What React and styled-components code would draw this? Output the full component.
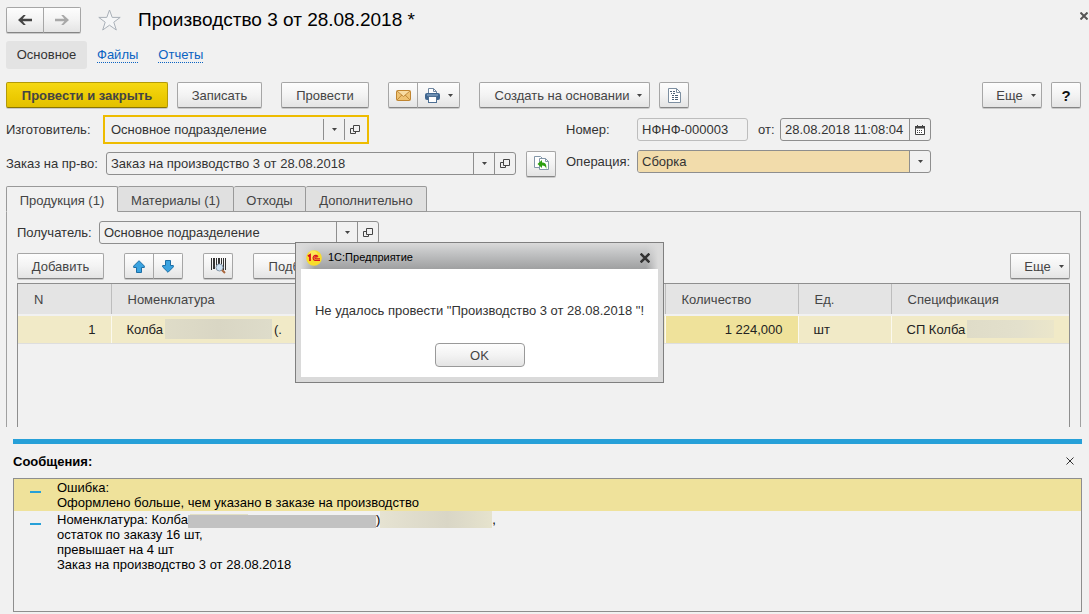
import React from "react";
import styled, { createGlobalStyle, css } from "styled-components";

const Global = createGlobalStyle`
  * { box-sizing: border-box; }
  body {
    margin: 0;
    background: #f1f1f1;
    color: #333;
    font: 13px/15px "Liberation Sans", Arial, sans-serif;
  }
  button, input, select { font: inherit; color: inherit; margin: 0; }
  h1, h2, p, ul { margin: 0; padding: 0; }
`;

const Page = styled.div`
  padding: 7px 8px 0 6px;
  position: relative;
`;

const Header = styled.header`
  display: flex;
  align-items: center;
  height: 25px;
`;

const raised = css`
  background: linear-gradient(#fdfdfd, #f3f3f3 50%, #e4e4e4);
  border: 1px solid #a6a6a6;
  border-bottom-color: #858585;
  border-radius: 2px;
  box-shadow: 0 1px 0 #c9c9c9;
`;

const Button = styled.button`
  ${raised}
  display: flex;
  align-items: center;
  justify-content: center;
  gap: 8px;
  flex: none;
  height: 26px;
  padding: 0;
  color: #444;
  width: ${(p) => p.$w}px;
  ${(p) => p.$drop && "padding-left: 8px;"}
  ${(p) =>
    p.$primary &&
    css`
      background: linear-gradient(#f5d813, #ecca02 60%, #e3c000);
      border-color: #b39a08;
      border-bottom-color: #8a7500;
      font-weight: bold;
    `}
  ${(p) =>
    p.$help &&
    css`
      font-weight: bold;
      font-size: 15px;
      color: #111;
    `}
`;

const Group = styled.div`
  display: flex;
  flex: none;
  ${Button} + ${Button} {
    margin-left: -1px;
    border-top-left-radius: 0;
    border-bottom-left-radius: 0;
  }
  ${Button}:first-child {
    border-top-right-radius: 0;
    border-bottom-right-radius: 0;
  }
`;

const Star = styled.button`
  border: 0;
  background: none;
  padding: 0;
  display: flex;
  margin: 0 16px;
`;

const Title = styled.h1`
  font-size: 19px;
  line-height: 24px;
  font-weight: normal;
  color: #000;
`;

const CloseButton = styled.button`
  border: 0;
  background: none;
  padding: 0;
  display: flex;
  margin-left: auto;
`;

const FormClose = styled(CloseButton)`
  position: absolute;
  top: 12px;
  right: 1px;
`;

const Sections = styled.nav`
  display: flex;
  align-items: center;
  height: 28px;
  margin-top: 9px;
  gap: 20px;
`;

const Current = styled.span`
  background: #e3e3e3;
  border-radius: 3px;
  line-height: 28px;
  width: 81px;
  text-align: center;
  margin-right: -10px;
`;

const SectionLink = styled.a`
  color: #0a63c2;
  text-decoration: none;
  border-bottom: 1px dotted #0a63c2;
  line-height: 15px;
`;

const Toolbar = styled.div`
  display: flex;
  align-items: flex-start;
  height: 27px;
  gap: ${(p) => p.$gap}px;
  margin-top: ${(p) => p.$top}px;
`;

const Cluster = styled.div`
  display: flex;
  gap: 9px;
`;

const Right = styled.div`
  display: flex;
  align-items: center;
  gap: 9px;
  margin-left: auto;
`;

const Form = styled.div`
  display: grid;
  grid-template-columns: 550px 365px;
  column-gap: 10px;
  margin-top: 6px;
`;

const FormColumn = styled.div`
  display: flex;
  flex-direction: column;
  gap: ${(p) => (p.$compact ? 9 : 6)}px;
  padding-top: ${(p) => (p.$compact ? 3 : 0)}px;
`;

const FieldRow = styled.div`
  display: flex;
  align-items: center;
  min-height: ${(p) => p.$h || 23}px;
`;

const Label = styled.label`
  flex: none;
  width: ${(p) => (p.$w ? p.$w + "px" : "auto")};
  white-space: nowrap;
`;

const Frame = styled.div`
  display: flex;
  flex: none;
  width: ${(p) => p.$w}px;
  height: 23px;
  border: 1px solid ${(p) => (p.$dim ? "#bdbdbd" : "#8e8e8e")};
  border-radius: 3px;
  overflow: hidden;
  ${(p) =>
    p.$focus &&
    css`
      height: 29px;
      border: 2px solid #eebc00;
      border-radius: 0;
      padding: 2px 2px 2px 0;
    `}
`;

const fieldText = css`
  flex: 1;
  min-width: 0;
  border: 0;
  outline: 0;
  background: transparent;
  padding: 0 0 0 4px;
`;

const TextInput = styled.input`
  ${fieldText}
  ${(p) => p.$inset && "padding-left: 6px;"}
`;

const Select = styled.select`
  ${fieldText}
  appearance: none;
  background: #f2dcab;
`;

const Slot = styled.button`
  display: flex;
  align-items: center;
  justify-content: center;
  width: 21px;
  flex: none;
  border: 0;
  border-left: 1px solid #8e8e8e;
  background: transparent;
  padding: 0;
`;

const Tabs = styled.div`
  display: flex;
  height: 26px;
  margin-top: 9px;
  position: relative;
`;

const Tab = styled.button`
  width: ${(p) => p.$w}px;
  height: 26px;
  padding: 2px 0 0;
  border: 1px solid #999;
  border-left-width: ${(p) => (p.$active ? 1 : 0)}px;
  border-radius: 2px 2px 0 0;
  background: #e0e0e0;
  color: #444;
  ${(p) =>
    p.$active &&
    css`
      background: #f1f1f1;
      border-bottom-color: #f1f1f1;
    `}
`;

const Panel = styled.section`
  margin-top: -1px;
  border: 1px solid #a0a0a0;
  border-bottom: 0;
  padding: 9px 10px 0;
  min-height: 216px;
`;

const Grid = styled.div`
  border: 1px solid #8e8e8e;
  border-bottom: 0;
  margin-top: 3px;
  height: 144px;
`;

const Table = styled.table`
  width: 100%;
  table-layout: fixed;
  border-collapse: collapse;
`;

const Th = styled.th`
  height: 31px;
  padding: 0 0 0 16px;
  text-align: left;
  font-weight: normal;
  color: #444;
  background: #e4e4e4;
  border-right: 1px solid #bdbdbd;
  border-bottom: 1px solid #bdbdbd;
  &:last-child { border-right: 0; }
`;

const Td = styled.td`
  height: 28px;
  padding: 0 15px;
  white-space: nowrap;
  text-align: ${(p) => (p.$num ? "right" : "left")};
  color: #222;
  background: ${(p) => (p.$current ? "#efe29b" : "#f1eac7")};
  border-right: 1px solid #fbf9ee;
  border-bottom: 1px solid #dedede;
  border-top: 2px solid #f1f1f1;
  &:last-child { border-right: 0; }
`;

const CellLine = styled.span`
  display: flex;
  align-items: center;
  gap: 2px;
`;

const Redacted = styled.span`
  flex: none;
  width: ${(p) => p.$w}px;
  height: ${(p) => p.$h}px;
  background: ${(p) => p.$bg};
`;

const Messages = styled.section`
  margin: 12px -1px 0 7px;
  border-top: 5px solid #27a0d8;
`;

const MessagesHead = styled.div`
  display: flex;
  align-items: center;
  height: 34px;
  padding-right: 8px;
  color: #000;
`;

const MessagesTitle = styled.h2`
  font-size: 13px;
  font-weight: bold;
`;

const MessageList = styled.ul`
  list-style: none;
  border: 1px solid #8e8e8e;
  height: 134px;
  color: #000;
`;

const Message = styled.li`
  display: flex;
  padding: 1px 0 1px 16px;
  background: ${(p) => (p.$selected ? "#efe29b" : "transparent")};
`;

const Dash = styled.span`
  flex: none;
  width: 11px;
  height: 2px;
  margin: 11px 16px 0 0;
  background: #27a0d8;
`;

const MessageLine = styled.p`
  display: flex;
  align-items: center;
  height: 15px;
`;

const Dialog = styled.div`
  position: absolute;
  left: 295px;
  top: 242px;
  width: 369px;
  border: 1px solid #7f7f7f;
  background: #dadada;
  padding: 0 5px 5px;
`;

const DialogBar = styled.div`
  display: flex;
  align-items: center;
  height: 26px;
  gap: 6px;
  padding: 3px 8px 0 5px;
  font-size: 11px;
  color: #000;
  background:
    linear-gradient(90deg, #dadada, transparent 14px, transparent 345px, #dadada),
    linear-gradient(#dadada, #c4c5c6 35%, #9fa0a1);
`;

const DialogBody = styled.div`
  background: #fff;
  height: 108px;
  padding-top: 34px;
  display: flex;
  flex-direction: column;
  align-items: center;
  gap: 25px;
  white-space: nowrap;
`;

const OkButton = styled(Button)`
  height: 24px;
  border-radius: 4px;
  border-color: #999;
  box-shadow: none;
`;

const Caret = () => (
  <svg width="5" height="3" viewBox="0 0 5 3" aria-hidden="true">
    <path d="M0 0h5L2.5 3z" fill="#444" />
  </svg>
);

const ArrowIcon = ({ flip, color }) => (
  <svg width="14" height="12" viewBox="0 0 14 12" aria-hidden="true">
    <path
      d="M0 6 5.500 1h2.300L4.600 4.800H14v2.400H4.600L7.800 11H5.500z"
      fill={color}
      transform={flip ? "translate(14 0) scale(-1 1)" : undefined}
    />
  </svg>
);

const StarIcon = () => (
  <svg width="25" height="24" viewBox="0 0 25 24" aria-hidden="true">
    <path
      d="M12.5 2 15.2 9.4h8l-6.4 4.8 2.5 7.8-6.8-4.8L5.7 22l2.5-7.8L1.8 9.4h8z"
      fill="#f5f6f7"
      stroke="#a9b0b8"
    />
  </svg>
);

const OpenIcon = () => (
  <svg width="10" height="10" viewBox="0 0 10 10" fill="none" stroke="#444" aria-hidden="true">
    <path d="M3.5.5h6v6h-6zM3.5 3.5h-3v5h5v-2" />
  </svg>
);

const CrossIcon = ({ size = 8, weight = 1, color = "#333" }) => (
  <svg width={size} height={size} viewBox="0 0 8 8" aria-hidden="true">
    <path d="M.5.5l7 7M7.5.5l-7 7" stroke={color} strokeWidth={weight} />
  </svg>
);

const MailIcon = () => (
  <svg width="15" height="11" viewBox="0 0 15 11" aria-hidden="true">
    <rect x=".5" y=".5" width="14" height="10" rx="1" fill="#efc373" stroke="#c08530" />
    <path d="M1 1h13L7.500 6.500z" fill="#f8dca2" />
    <path d="M1 1l6.500 5.500L14 1M1 10l4.800-5M14 10 9.200 5" fill="none" stroke="#b47a2a" strokeWidth=".8" />
  </svg>
);

const PrinterIcon = () => (
  <svg width="15" height="15" viewBox="0 0 15 15" aria-hidden="true">
    <path d="M3.500 6V.5h5l3 3V6" fill="#fff" stroke="#6f86a0" />
    <path d="M8.500.5v3h3" fill="none" stroke="#6f86a0" />
    <rect y="5" width="15" height="7" rx="2" fill="#3f6690" />
    <path d="M2 7h11" stroke="#9bb7d3" />
    <rect x="3.500" y="8.500" width="8" height="6" fill="#fff" stroke="#4e6f93" />
  </svg>
);

const ReportIcon = () => (
  <svg width="13" height="15" viewBox="0 0 13 15" fill="none" aria-hidden="true">
    <path d="M.5.5h8l4 4v10H.5z" fill="#fff" stroke="#7d8fa1" />
    <path d="M8.500.5v4h4" stroke="#7d8fa1" />
    <path d="M2 3.500h2M5 3.500h2M3 5.500h1M5 5.500h2M4 7.500h2M7 7.500h3M4 9.500h2M7 9.500h3M4 11.500h2M7 11.500h3" stroke="#4b5f74" />
  </svg>
);

const CalendarIcon = () => (
  <svg width="10" height="10" viewBox="0 0 10 10" aria-hidden="true">
    <path d="M.5 2h9v7.500h-9z" fill="#fff" stroke="#444" />
    <path d="M0 1h10v2.500H0zM2 0h1v2H2zM7 0h1v2H7z" fill="#444" />
    <path d="M2 5.500h6M2 7.500h6" stroke="#444" strokeDasharray="1 1" />
  </svg>
);

const RefillIcon = () => (
  <svg width="15" height="15" viewBox="0 0 15 15" aria-hidden="true">
    <path d="M.5.5h6l2 2v9h-8z" fill="#fff" stroke="#8296a8" />
    <path d="M5.500 2.500h6l3 3v8h-9z" fill="#fff" stroke="#8296a8" />
    <path d="M11.500 2.500v3h3" fill="none" stroke="#8296a8" />
    <path d="M3.500 8 8 4v2.500c3.500 0 4.800 2 4.300 6.500-.800-2.700-1.800-3.500-4.300-3.500V12z" fill="#2da012" />
  </svg>
);

const MoveIcon = ({ down }) => (
  <svg width="12" height="13" viewBox="0 0 12 13" aria-hidden="true">
    <path
      d="M6 .7l5.300 5.300v1.500H8.500v5h-5v-5H.7V6z"
      fill="#3aa3e0"
      stroke="#1c6ea6"
      transform={down ? "translate(0 13) scale(1 -1)" : undefined}
    />
  </svg>
);

const BarcodeIcon = () => (
  <svg width="15" height="16" viewBox="0 0 15 16" aria-hidden="true">
    <path
      d="M0 0h1v12H0zM2 0h2v11H2zM5 0h1v9H5zM7 0h2v6H7zM10 0h1v6h-1zM12 0h1v12h-1zM14 0h1v12h-1z"
      fill="#333"
    />
    <circle cx="8.500" cy="9.500" r="3.500" fill="#cfe2f2" stroke="#8496a8" />
    <path d="M11 12l3 3" stroke="#a8653a" strokeWidth="2" />
  </svg>
);

const BrandIcon = () => (
  <svg width="16" height="16" viewBox="0 0 16 16" aria-hidden="true">
    <circle cx="8" cy="8" r="7.800" fill="#f8dc2c" />
    <circle cx="7" cy="5" r="4.500" fill="#fff07a" opacity=".6" />
    <path d="M2 6.300 4 5v6" fill="none" stroke="#d8141c" strokeWidth="1.800" />
    <path d="M12 6.800A2.600 2.600 0 1 0 9 10.500h5M11 7.600A1.100 1.100 0 1 0 9.500 8.800H14" fill="none" stroke="#d8141c" strokeWidth="1.200" />
  </svg>
);

function Combo({ id, value, width, focus }) {
  return (
    <Frame $w={width} $focus={focus}>
      <TextInput id={id} defaultValue={value} $inset={focus} />
      <Slot aria-label="Выбрать"><Caret /></Slot>
      <Slot aria-label="Открыть"><OpenIcon /></Slot>
    </Frame>
  );
}

export default function App() {
  return (
    <>
      <Global />
      <Page>
        <Header>
          <Group>
            <Button $w={38} aria-label="Назад"><ArrowIcon color="#444" /></Button>
            <Button $w={38} aria-label="Вперед"><ArrowIcon flip color="#a8a8a8" /></Button>
          </Group>
          <Star aria-label="В избранное"><StarIcon /></Star>
          <Title>Производство 3 от 28.08.2018 *</Title>
          <FormClose aria-label="Закрыть форму"><CrossIcon weight={2} color="#555" /></FormClose>
        </Header>

        <Sections>
          <Current>Основное</Current>
          <SectionLink href="#files">Файлы</SectionLink>
          <SectionLink href="#reports">Отчеты</SectionLink>
        </Sections>

        <Toolbar $gap={19} $top={13}>
          <Cluster>
            <Button $w={162} $primary>Провести и закрыть</Button>
            <Button $w={85}>Записать</Button>
          </Cluster>
          <Button $w={88}>Провести</Button>
          <Group>
            <Button $w={30} aria-label="Отправить по почте"><MailIcon /></Button>
            <Button $w={43} aria-label="Печать"><PrinterIcon /><Caret /></Button>
          </Group>
          <Cluster>
            <Button $w={171} $drop>Создать на основании<Caret /></Button>
            <Button $w={30} aria-label="Отчет"><ReportIcon /></Button>
          </Cluster>
          <Right>
            <Button $w={60} $drop>Еще<Caret /></Button>
            <Button $w={30} $help>?</Button>
          </Right>
        </Toolbar>

        <Form>
          <FormColumn>
            <FieldRow $h={29}>
              <Label $w={97} htmlFor="maker">Изготовитель:</Label>
              <Combo id="maker" value="Основное подразделение" width={266} focus />
            </FieldRow>
            <FieldRow $h={27}>
              <Label $w={100} htmlFor="order">Заказ на пр-во:</Label>
              <Combo id="order" value="Заказ на производство 3 от 28.08.2018" width={410} />
              <Right>
                <Button $w={30} aria-label="Заполнить по заказу"><RefillIcon /></Button>
              </Right>
            </FieldRow>
          </FormColumn>
          <FormColumn $compact>
            <FieldRow>
              <Label $w={71} htmlFor="number">Номер:</Label>
              <Frame $w={111} $dim>
                <TextInput id="number" defaultValue="НФНФ-000003" />
              </Frame>
              <Right>
                <Label $w={13} htmlFor="date">от:</Label>
                <Frame $w={151}>
                  <TextInput id="date" defaultValue="28.08.2018 11:08:04" />
                  <Slot aria-label="Календарь"><CalendarIcon /></Slot>
                </Frame>
              </Right>
            </FieldRow>
            <FieldRow>
              <Label $w={71} htmlFor="operation">Операция:</Label>
              <Frame $w={294}>
                <Select id="operation" defaultValue="Сборка">
                  <option>Сборка</option>
                </Select>
                <Slot as="span" aria-hidden="true"><Caret /></Slot>
              </Frame>
            </FieldRow>
          </FormColumn>
        </Form>

        <Tabs role="tablist">
          <Tab role="tab" $w={112} $active aria-selected="true">Продукция (1)</Tab>
          <Tab role="tab" $w={116}>Материалы (1)</Tab>
          <Tab role="tab" $w={72}>Отходы</Tab>
          <Tab role="tab" $w={121}>Дополнительно</Tab>
        </Tabs>

        <Panel>
          <FieldRow>
            <Label $w={82} htmlFor="receiver">Получатель:</Label>
            <Combo id="receiver" value="Основное подразделение" width={280} />
          </FieldRow>
          <Toolbar $gap={20} $top={9}>
            <Button $w={87}>Добавить</Button>
            <Group>
              <Button $w={30} aria-label="Переместить вверх"><MoveIcon /></Button>
              <Button $w={30} aria-label="Переместить вниз"><MoveIcon down /></Button>
            </Group>
            <Button $w={30} aria-label="Поиск по штрихкоду"><BarcodeIcon /></Button>
            <Button $w={77}>Подбор</Button>
            <Right>
              <Button $w={60} $drop>Еще<Caret /></Button>
            </Right>
          </Toolbar>
          <Grid>
            <Table>
              <colgroup>
                <col width="93" />
                <col />
                <col width="133" />
                <col width="93" />
                <col width="178" />
              </colgroup>
              <thead>
                <tr>
                  <Th>N</Th>
                  <Th>Номенклатура</Th>
                  <Th>Количество</Th>
                  <Th>Ед.</Th>
                  <Th>Спецификация</Th>
                </tr>
              </thead>
              <tbody>
                <tr>
                  <Td $num>1</Td>
                  <Td>
                    <CellLine>
                      Колба
                      <Redacted $w={107} $h={20} $bg="linear-gradient(90deg, #dfdcc8, #d9d6c4 50%, #dedcca)" />
                      (.
                    </CellLine>
                  </Td>
                  <Td $num $current>1 224,000</Td>
                  <Td>шт</Td>
                  <Td>
                    <CellLine>
                      СП Колба
                      <Redacted $w={87} $h={18} $bg="linear-gradient(90deg, #dfdcc8, #e3e0cc 60%, #ebe6ca)" />
                    </CellLine>
                  </Td>
                </tr>
              </tbody>
            </Table>
          </Grid>
        </Panel>

        <Messages>
          <MessagesHead>
            <MessagesTitle>Сообщения:</MessagesTitle>
            <CloseButton aria-label="Закрыть сообщения"><CrossIcon /></CloseButton>
          </MessagesHead>
          <MessageList>
            <Message $selected>
              <Dash />
              <div>
                <MessageLine>Ошибка:</MessageLine>
                <MessageLine>Оформлено больше, чем указано в заказе на производство</MessageLine>
              </div>
            </Message>
            <Message>
              <Dash />
              <div>
                <MessageLine>
                  Номенклатура: Колба
                  <Redacted
                    $w={188}
                    $h={17}
                    $bg="linear-gradient(#c2c2c2, #c2c2c2) 0 4px / 100% 13px no-repeat, linear-gradient(#e2dfc4, #e2dfc4) 2px 3px / 58px 1px no-repeat"
                  />
                  )
                  <Redacted $w={112} $h={17} $bg="linear-gradient(90deg, #e6e3d2, #d9d6c6 60%, #e6e3cd)" />
                  ,
                </MessageLine>
                <MessageLine>остаток по заказу 16 шт,</MessageLine>
                <MessageLine>превышает на 4 шт</MessageLine>
                <MessageLine>Заказ на производство 3 от 28.08.2018</MessageLine>
              </div>
            </Message>
          </MessageList>
        </Messages>

        <Dialog role="dialog" aria-label="1С:Предприятие">
          <DialogBar>
            <BrandIcon />
            <span>1С:Предприятие</span>
            <CloseButton aria-label="Закрыть"><CrossIcon size={10} weight={2} /></CloseButton>
          </DialogBar>
          <DialogBody>
            <p>Не удалось провести "Производство 3 от 28.08.2018 "!</p>
            <OkButton $w={90}>OK</OkButton>
          </DialogBody>
        </Dialog>
      </Page>
    </>
  );
}
